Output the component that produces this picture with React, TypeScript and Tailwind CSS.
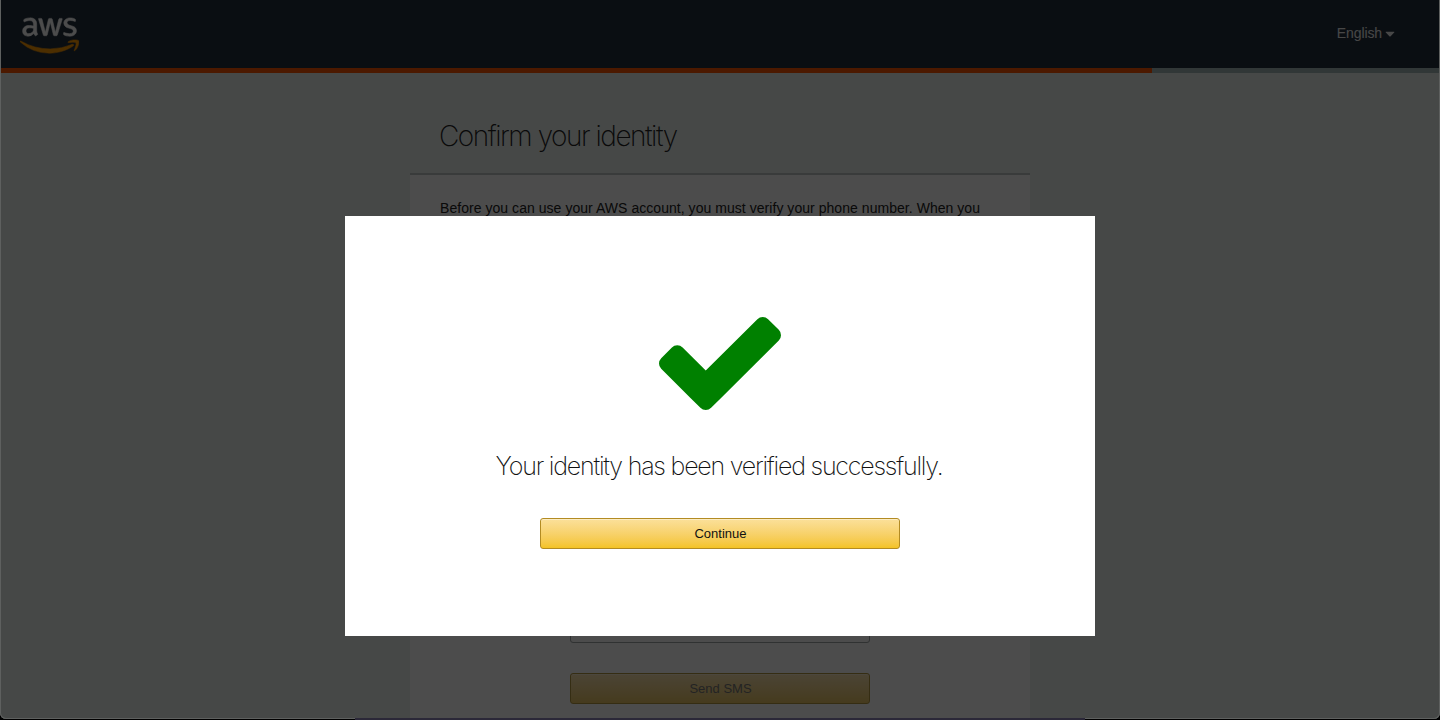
import { FaAws, FaCaretDown } from "react-icons/fa";

function AwsLogo() {
  return (
    <div className="mt-3 h-[47px] w-[59px]">
      <svg width="0" height="0" className="absolute">
        <defs>
          <linearGradient id="aws-fill" x1="0" y1="0" x2="0" y2="1">
            <stop offset="0.58" stopColor="#ffffff" />
            <stop offset="0.58" stopColor="#ff9900" />
          </linearGradient>
        </defs>
      </svg>
      <FaAws className="h-[47px] w-[59px] fill-[url(#aws-fill)] stroke-[url(#aws-fill)] stroke-[6px]" />
    </div>
  );
}

function CheckMark() {
  return (
    <svg viewBox="121 334 1550 1188" preserveAspectRatio="none" className="h-[93px] w-[122px] fill-[#008000]">
      <path d="M1671 566q0 40-28 68l-724 724-136 136q-28 28-68 28t-68-28l-136-136-362-362q-28-28-28-68t28-68l136-136q28-28 68-28t68 28l294 295 656-657q28-28 68-28t68 28l136 136q28 28 28 68z" />
    </svg>
  );
}

const buttonBase =
  "flex h-[31px] items-center justify-center rounded-[3px] border pl-px text-[13px] shadow-[inset_0_1px_0_rgba(255,255,255,0.4)]";

function Page() {
  return (
    <div className="flex h-full flex-col bg-[#eaf0ed]">
      <header className="flex h-[68px] shrink-0 items-start justify-between bg-[#232f3e] pl-5 pr-[45px]">
        <AwsLogo />
        <div className="mt-[23px] flex items-center gap-[3px] text-sm leading-5 text-[#eeeeee]">
          <span className="tracking-[-0.1px]">English</span>
          <FaCaretDown className="h-[15px] w-[10px]" />
        </div>
      </header>

      {/* Sign-up progress */}
      <div className="h-[5px] shrink-0 bg-[#a4bab8]">
        <div className="h-full w-4/5 bg-[#ff5500]" />
      </div>

      <main className="mx-auto flex w-[620px] flex-1 flex-col">
        <h1 className="h-[102px] shrink-0 border-b-2 border-[#c0c6c6] pl-[29px] pt-[46px] font-['Inter'] text-[28px] font-extralight leading-[34px] tracking-[-1.46px] whitespace-nowrap text-[#222]">
          Confirm your identity
        </h1>
        <div className="flex flex-1 flex-col items-center bg-[#fefefe] pt-[23px]">
          <p className="h-[401px] w-[560px] shrink-0 text-sm leading-5 tracking-[0.045px] whitespace-nowrap text-[#222]">
            Before you can use your AWS account, you must verify your phone number. When you
          </p>
          <div className="h-11 w-[300px] shrink-0 rounded-[3px] border border-[#a0a8a8]" />
          <div
            className={`mt-[30px] w-[300px] shrink-0 border-[#b39640] bg-linear-to-b from-[#fbe4b0] to-[#e9c564] text-[#777] ${buttonBase}`}
          >
            Send SMS
          </div>
        </div>
      </main>
    </div>
  );
}

function SuccessModal() {
  return (
    <div className="absolute inset-0 flex items-start justify-center bg-black/70 pt-[216px]">
      <div className="flex h-[420px] w-[750px] flex-col items-center bg-white pt-[101px]">
        <CheckMark />
        <h2 className="mt-[39px] pr-0.5 font-['Inter'] text-[25px] font-extralight leading-[34px] tracking-[-1.22px] whitespace-nowrap text-[#111]">
          Your identity has been verified successfully.
        </h2>
        <button
          className={`mt-[35px] w-[360px] border-[#b38b22] bg-linear-to-b from-[#fbe09a] to-[#f4c322] text-[#111] ${buttonBase}`}
        >
          Continue
        </button>
      </div>
    </div>
  );
}

export default function App() {
  return (
    <div className="relative h-[720px] w-[1440px] overflow-hidden bg-black pb-px font-['Liberation_Sans',Arial,sans-serif]">
      <div className="relative h-[719px] overflow-hidden rounded-b-[6px]">
        <Page />
        <SuccessModal />
        {/* Window edge */}
        <div className="pointer-events-none absolute inset-0 rounded-b-[6px] border border-t-0 border-[#5e605f]" />
      </div>
      <div className="absolute bottom-0 left-[355px] h-[2px] w-[730px] bg-[#2b2838]" />
    </div>
  );
}
